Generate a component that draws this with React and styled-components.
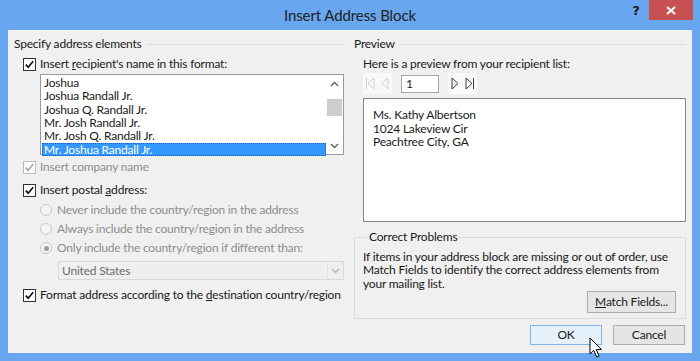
import React from "react";
import styled, { createGlobalStyle } from "styled-components";

const GlobalStyle = createGlobalStyle`
  body {
    margin: 0;
    background: #ffffff;
  }
  * {
    box-sizing: border-box;
  }
`;

const Window = styled.div`
  position: relative;
  width: 700px;
  height: 361px;
  overflow: hidden;
  display: flex;
  flex-direction: column;
  background: #68a6f0;
  font-family: Lato, "Noto Sans", sans-serif;
  font-size: 12px;
  letter-spacing: -0.2px;
  color: #1a1a1a;
`;

const TitleBar = styled.div`
  height: 30px;
  display: grid;
  grid-template-columns: 1fr auto 1fr;
  align-items: start;
`;

const Title = styled.div`
  grid-column: 2;
  font-size: 15px;
  letter-spacing: -0.1px;
  line-height: 30px;
  color: #222222;
`;

const Caption = styled.div`
  justify-self: end;
  display: flex;
  margin-right: 7px;
`;

const HelpButton = styled.div`
  width: 26px;
  height: 20px;
  text-align: center;
  font-family: "DejaVu Sans", sans-serif;
  font-weight: bold;
  font-size: 13px;
  line-height: 22px;
  color: #1a1a1a;
`;

const CloseButton = styled.div`
  width: 44px;
  height: 20px;
  display: flex;
  align-items: center;
  justify-content: center;
  background: #c75050;
`;

const Body = styled.div`
  flex: 1;
  margin: 0 8px 8px;
  background: #f0f0f0;
  display: grid;
  grid-template-columns: 337px minmax(0, 1fr);
`;

const LeftPane = styled.div`
  padding: 6px 0 0 6px;
  display: flex;
  flex-direction: column;
`;

const RightPane = styled.div`
  padding: 6px 6px 0 9px;
  display: flex;
  flex-direction: column;
`;

const GroupHeader = styled.div`
  display: flex;
  align-items: center;
  height: 16px;
  line-height: 16px;
  white-space: nowrap;
`;

const GroupLine = styled.div`
  flex: 1;
  height: 1px;
  margin-left: 6px;
  background: #dcdcdc;
`;

const Row = styled.div`
  display: flex;
  align-items: center;
  height: 16px;
  line-height: 16px;
  white-space: nowrap;
  margin-top: ${(p) => p.$top || 0}px;
  margin-left: ${(p) => p.$indent || 0}px;
  color: ${(p) => (p.$disabled ? "#8d8d8d" : "#1a1a1a")};
`;

const Label = styled.span`
  white-space: pre;
`;

const CheckBox = styled.span`
  flex: none;
  width: 13px;
  height: 13px;
  margin-right: 4px;
  display: flex;
  align-items: center;
  justify-content: center;
  background: #ffffff;
  border: 1px solid ${(p) => (p.$disabled ? "#bcbcbc" : "#333333")};
`;

const RadioCircle = styled.span`
  position: relative;
  flex: none;
  width: 12px;
  height: 12px;
  margin-right: 5px;
  border-radius: 50%;
  border: 1px solid #c6c6c6;
  background: #f4f4f4;

  &::after {
    content: "";
    display: ${(p) => (p.$checked ? "block" : "none")};
    position: absolute;
    left: 2.5px;
    top: 2.5px;
    width: 5px;
    height: 5px;
    border-radius: 50%;
    background: #9c9c9c;
  }
`;

const ListBox = styled.div`
  display: flex;
  width: 304px;
  height: 81px;
  margin: 2px 0 0 26px;
  border: 1px solid #9a9a9a;
  background: #ffffff;
`;

const ListItems = styled.div`
  flex: 1;
  padding: 1px 0 0 1px;
`;

const ListItem = styled.div`
  height: 13.33px;
  line-height: 13.33px;
  padding-left: 2px;
  white-space: nowrap;
  background: ${(p) => (p.$selected ? "#3399ff" : "transparent")};
  color: ${(p) => (p.$selected ? "#ffffff" : "#1a1a1a")};
  outline: ${(p) => (p.$selected ? "1px dotted #1a5fb4" : "none")};
  outline-offset: -1px;
`;

const ScrollBar = styled.div`
  width: 17px;
  display: flex;
  flex-direction: column;
  align-items: center;
  background: #ffffff;
`;

const ScrollArrow = styled.div`
  height: 17px;
  display: flex;
  align-items: center;
  justify-content: center;
`;

const ScrollTrack = styled.div`
  flex: 1;
  width: 100%;
  padding: 7px 1px 0;
`;

const ScrollThumb = styled.div`
  height: 17px;
  background: #cdcdcd;
`;

const Dropdown = styled.div`
  display: flex;
  width: 286px;
  height: 19px;
  margin: 5px 0 0 44px;
  border: 1px solid #d9d9d9;
  background: #efefef;
  color: #6d6d6d;
`;

const DropdownText = styled.div`
  flex: 1;
  padding-left: 3px;
  line-height: 17px;
`;

const DropdownArrow = styled.div`
  width: 16px;
  display: flex;
  align-items: center;
  justify-content: center;
  border-left: 1px solid #e2e2e2;
`;

const NavRow = styled.div`
  display: flex;
  align-items: center;
  height: 21px;
  margin: 1px 0 0 9px;
`;

const NavPair = styled.div`
  display: flex;
  width: 29px;
  height: 21px;
  margin-left: ${(p) => p.$gap || 0}px;
  background: ${(p) => (p.$disabled ? "#f8f8f8" : "#fafafa")};
`;

const NavButton = styled.div`
  flex: 1;
  display: flex;
  align-items: center;
  justify-content: center;
`;

const RecordInput = styled.div`
  width: 38px;
  height: 18px;
  margin-left: 9px;
  padding-left: 4px;
  line-height: 16px;
  border: 1px solid #a8a8a8;
  background: #ffffff;
`;

const PreviewBox = styled.div`
  width: 323px;
  height: 124px;
  margin: 4px 0 0 9px;
  padding: 9px 0 0 9px;
  border: 1px solid #828790;
  background: #ffffff;
  line-height: 13.5px;
`;

const Group = styled.fieldset`
  width: 332px;
  margin: 7px 0 0;
  padding: 0 9px 5px 8px;
  min-width: 0;
  border: 1px solid #dcdcdc;
  display: flex;
  flex-direction: column;
`;

const Legend = styled.legend`
  margin-left: 4px;
  padding: 0 2px;
  line-height: 16px;
`;

const Paragraph = styled.div`
  margin-top: 5px;
  line-height: 13.33px;
  white-space: nowrap;
`;

const ButtonRow = styled.div`
  display: flex;
  justify-content: flex-end;
  gap: ${(p) => p.$gap || 0}px;
  margin: ${(p) => p.$margin || "0"};
`;

const Button = styled.div`
  width: ${(p) => p.$width}px;
  height: ${(p) => p.$height}px;
  display: flex;
  align-items: center;
  justify-content: center;
  white-space: pre;
  border: 1px solid ${(p) => (p.$default ? "#7eb4ea" : "#adadad")};
  background: ${(p) => (p.$default ? "#e5f1fb" : "#e5e5e5")};
  color: #1a1a1a;
`;

const Cursor = styled.svg`
  position: absolute;
  left: 589px;
  top: 337px;
`;

const Check = ({ disabled }) => (
  <CheckBox $disabled={disabled}>
    <svg width="11" height="11" viewBox="0 0 11 11">
      <path
        d="M1.8 5.6 L4.2 8.2 L9.2 2.3"
        fill="none"
        stroke={disabled ? "#a8a8a8" : "#111111"}
        strokeWidth="1.7"
      />
    </svg>
  </CheckBox>
);

const Chevron = ({ dir = "down", color = "#606060" }) => (
  <svg width="9" height="6" viewBox="0 0 9 6">
    <path
      d={dir === "up" ? "M1 5 L4.5 1.5 L8 5" : "M1 1 L4.5 4.5 L8 1"}
      fill="none"
      stroke={color}
      strokeWidth="1.4"
    />
  </svg>
);

const NavIcon = ({ kind, color }) => {
  const shapes = {
    first: (
      <>
        <path d="M3.5 5 V16" stroke={color} />
        <path d="M11 5 L5 10.5 L11 16 Z" fill="none" stroke={color} />
      </>
    ),
    prev: <path d="M10 5 L4 10.5 L10 16 Z" fill="none" stroke={color} />,
    next: <path d="M4 5 L10 10.5 L4 16 Z" fill="none" stroke={color} />,
    last: (
      <>
        <path d="M3 5 L9 10.5 L3 16 Z" fill="none" stroke={color} />
        <path d="M10.5 5 V16" stroke={color} />
      </>
    ),
  };
  return (
    <svg width="14" height="21" viewBox="0 0 14 21">
      {shapes[kind]}
    </svg>
  );
};

const names = [
  "Joshua",
  "Joshua Randall Jr.",
  "Joshua Q. Randall Jr.",
  "Mr. Josh Randall Jr.",
  "Mr. Josh Q. Randall Jr.",
  "Mr. Joshua Randall Jr.",
];

export default function App() {
  return (
    <Window>
      <GlobalStyle />
      <TitleBar>
        <Title>Insert Address Block</Title>
        <Caption>
          <HelpButton>?</HelpButton>
          <CloseButton>
            <svg width="10" height="9" viewBox="0 0 10 9">
              <path d="M1 1 L9 8 M9 1 L1 8" stroke="#ffffff" strokeWidth="2" />
            </svg>
          </CloseButton>
        </Caption>
      </TitleBar>

      <Body>
        <LeftPane>
          <GroupHeader>
            Specify address elements
            <GroupLine />
          </GroupHeader>

          <Row $top={4} $indent={9}>
            <Check />
            <Label>
              Insert <u>r</u>ecipient's name in this format:
            </Label>
          </Row>

          <ListBox>
            <ListItems>
              {names.map((n, i) => (
                <ListItem key={n} $selected={i === names.length - 1}>
                  {n}
                </ListItem>
              ))}
            </ListItems>
            <ScrollBar>
              <ScrollArrow>
                <Chevron dir="up" />
              </ScrollArrow>
              <ScrollTrack>
                <ScrollThumb />
              </ScrollTrack>
              <ScrollArrow>
                <Chevron dir="down" />
              </ScrollArrow>
            </ScrollBar>
          </ListBox>

          <Row $top={4} $indent={9} $disabled>
            <Check disabled />
            <Label>Insert company name</Label>
          </Row>

          <Row $top={7} $indent={9}>
            <Check />
            <Label>
              Insert postal <u>a</u>ddress:
            </Label>
          </Row>

          <Row $top={4} $indent={26} $disabled>
            <RadioCircle />
            <Label>Never include the country/region in the address</Label>
          </Row>
          <Row $top={3} $indent={26} $disabled>
            <RadioCircle />
            <Label>Always include the country/region in the address</Label>
          </Row>
          <Row $top={3} $indent={26} $disabled>
            <RadioCircle $checked />
            <Label>Only include the country/region if different than:</Label>
          </Row>

          <Dropdown>
            <DropdownText>United States</DropdownText>
            <DropdownArrow>
              <Chevron color="#b5b5b5" />
            </DropdownArrow>
          </Dropdown>

          <Row $top={7} $indent={9}>
            <Check />
            <Label>
              Format address according to the <u>d</u>estination
              country/region
            </Label>
          </Row>
        </LeftPane>

        <RightPane>
          <GroupHeader>
            Preview
            <GroupLine />
          </GroupHeader>

          <Row $top={4} $indent={9}>
            <Label>Here is a preview from your recipient list:</Label>
          </Row>

          <NavRow>
            <NavPair $disabled>
              <NavButton>
                <NavIcon kind="first" color="#cfcfcf" />
              </NavButton>
              <NavButton>
                <NavIcon kind="prev" color="#cfcfcf" />
              </NavButton>
            </NavPair>
            <RecordInput>1</RecordInput>
            <NavPair $gap={9}>
              <NavButton>
                <NavIcon kind="next" color="#3c3c3c" />
              </NavButton>
              <NavButton>
                <NavIcon kind="last" color="#3c3c3c" />
              </NavButton>
            </NavPair>
          </NavRow>

          <PreviewBox>
            Ms. Kathy Albertson
            <br />
            1024 Lakeview Cir
            <br />
            Peachtree City, GA
          </PreviewBox>

          <Group>
            <Legend>Correct Problems</Legend>
            <Paragraph>
              If items in your address block are missing or out of order, use
              <br />
              Match Fields to identify the correct address elements from
              <br />
              your mailing list.
            </Paragraph>
            <ButtonRow $margin="1px 0 0">
              <Button $width={89} $height={22}>
                <u>M</u>atch Fields...
              </Button>
            </ButtonRow>
          </Group>

          <ButtonRow $gap={11} $margin="6px 1px 0 0">
            <Button $width={72} $height={20} $default>
              OK
            </Button>
            <Button $width={72} $height={20}>
              Cancel
            </Button>
          </ButtonRow>
        </RightPane>
      </Body>

      <Cursor width="14" height="22" viewBox="0 0 14 22">
        <path
          d="M1 1 L1 17 L4.8 13.4 L7.6 20 L10 19 L7.3 12.6 L12.5 12.6 Z"
          fill="#ffffff"
          stroke="#000000"
          strokeWidth="1"
          strokeLinejoin="round"
        />
      </Cursor>
    </Window>
  );
}
